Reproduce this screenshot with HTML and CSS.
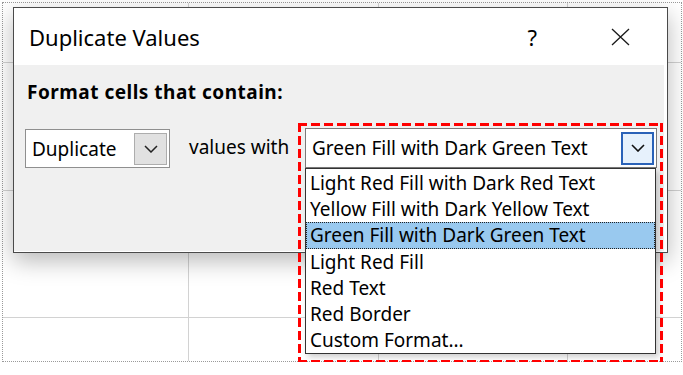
FILE: index.html
```html
<!DOCTYPE html>
<html lang="en">

<head>
    <meta charset="UTF-8">
    <meta name="viewport" content="width=device-width, initial-scale=1.0">
    <title>Duplicate Values</title>
    <link rel="stylesheet" href="styles.css">
</head>

<body>
    <div class="sheet">
        <div class="dialog">
            <div class="title-bar">
                <span class="title">Duplicate Values</span>
                <span class="help">?</span>
                <span class="close">
                    <svg width="19" height="18" viewBox="0 0 19 18">
                        <path d="M1 1 L18 17 M18 1 L1 17" stroke="#1a1a1a" stroke-width="1.3" fill="none" />
                    </svg>
                </span>
            </div>
            <div class="dialog-body">
                <div class="label">Format cells that contain:</div>
                <div class="rule-row">
                    <div class="select select-small">
                        <span class="select-text">Duplicate</span>
                        <span class="select-btn">
                            <svg width="14" height="8" viewBox="0 0 14 8">
                                <path d="M1 1 L7 7 L13 1" stroke="#222" stroke-width="1.5" fill="none" />
                            </svg>
                        </span>
                    </div>
                    <span class="values-with">values with</span>
                    <div class="combo-wrap">
                        <div class="select select-wide">
                            <span class="select-text">Green Fill with Dark Green Text</span>
                            <span class="select-btn focused">
                                <svg width="14" height="8" viewBox="0 0 14 8">
                                    <path d="M1 1 L7 7 L13 1" stroke="#111" stroke-width="1.6" fill="none" />
                                </svg>
                            </span>
                        </div>
                        <ul class="format-list">
                            <li>Light Red Fill with Dark Red Text</li>
                            <li>Yellow Fill with Dark Yellow Text</li>
                            <li class="selected">Green Fill with Dark Green Text</li>
                            <li>Light Red Fill</li>
                            <li>Red Text</li>
                            <li>Red Border</li>
                            <li>Custom Format...</li>
                        </ul>
                        <div class="callout"></div>
                    </div>
                </div>
            </div>
        </div>
    </div>
</body>

</html>
```

FILE: styles.css
```css
/* Page */
body {
    margin: 0;
    background: #fff;
    font-family: "Noto Sans", "Liberation Sans", sans-serif;
    color: #000;
}

/* Spreadsheet behind the dialog, grid lines drawn as background */
.sheet {
    margin: 2px 0 0 2px;
    width: 680px;
    height: 360px;
    box-sizing: border-box;
    border: 1px dotted #9a9a9a;
    padding: 4px 0 0 10px;
    background:
        linear-gradient(#d2d2d2, #d2d2d2) 185px 0 / 1px 100% no-repeat,
        linear-gradient(#d2d2d2, #d2d2d2) 375px 0 / 1px 100% no-repeat,
        linear-gradient(#d2d2d2, #d2d2d2) 564px 0 / 1px 100% no-repeat,
        linear-gradient(#d2d2d2, #d2d2d2) 0 59px / 100% 1px no-repeat,
        linear-gradient(#d2d2d2, #d2d2d2) 0 187px / 100% 1px no-repeat,
        linear-gradient(#d2d2d2, #d2d2d2) 0 314px / 100% 1px no-repeat;
}

/* Dialog window */
.dialog {
    width: 655px;
    height: 246px;
    box-sizing: border-box;
    border: 1px solid #4a4a4a;
    background: #fff;
    box-shadow: 0 8px 22px rgba(0, 0, 0, 0.28);
}

.title-bar {
    height: 57px;
    display: flex;
    align-items: center;
    padding: 0 37px 0 15px;
}

.title {
    font-size: 22px;
    flex: 1;
}

.help {
    font-size: 22px;
    margin-right: 74px;
}

.close {
    display: flex;
}

.dialog-body {
    background: #f0f0f0;
    height: 186px;
    margin-right: 3px;
    box-sizing: border-box;
    padding: 15px 7px 0 11px;
}

.label {
    font-weight: bold;
    font-size: 19px;
    letter-spacing: 0.5px;
    line-height: 24px;
    padding-left: 2px;
}

.rule-row {
    display: flex;
    align-items: flex-start;
    margin-top: 24px;
}

/* Dropdown boxes */
.select {
    display: flex;
    align-items: center;
    justify-content: space-between;
    box-sizing: border-box;
    background: #fff;
    border: 1px solid #8f8f8f;
    font-size: 19px;
}

.select-text {
    padding-left: 6px;
    white-space: nowrap;
}

.select-small {
    width: 145px;
    height: 39px;
    margin-top: 1px;
}

.select-wide {
    width: 352px;
    height: 40px;
    border-color: #7a7a7a;
}

.select-btn {
    width: 33px;
    height: 32px;
    margin-right: 2px;
    box-sizing: border-box;
    border: 1px solid #adadad;
    background: #e1e1e1;
    display: flex;
    align-items: center;
    justify-content: center;
}

.select-btn.focused {
    height: 33px;
    border: 2px solid #2a62b8;
    background: #e6f1fc;
}

.values-with {
    font-size: 19px;
    line-height: 39px;
    margin-left: 19px;
}

.combo-wrap {
    position: relative;
    margin-left: auto;
    width: 352px;
}

/* Open dropdown list */
.format-list {
    position: absolute;
    top: 40px;
    left: 0;
    width: 351px;
    margin: 0;
    padding: 1px 0 0;
    list-style: none;
    box-sizing: border-box;
    border: 1px solid #333;
    background: #fff;
    box-shadow: 3px 3px 6px rgba(0, 0, 0, 0.2);
    font-size: 19px;
    z-index: 2;
}

.format-list li {
    line-height: 26.2px;
    padding: 0 4px;
    white-space: nowrap;
}

.format-list li.selected {
    background: #99c9ef;
    outline: 1px dotted #222;
    outline-offset: -1px;
}

/* Red dashed annotation around the combo (short dashes, small gaps) */
.callout {
    position: absolute;
    left: -7px;
    top: -5px;
    width: 365px;
    height: 240px;
    background:
        repeating-linear-gradient(90deg, #f00 0 9px, transparent 9px 13px) left top / 100% 3px no-repeat,
        repeating-linear-gradient(90deg, #f00 0 9px, transparent 9px 13px) left bottom / 100% 3px no-repeat,
        repeating-linear-gradient(180deg, #f00 0 9px, transparent 9px 13px) left top / 3px 100% no-repeat,
        repeating-linear-gradient(180deg, #f00 0 9px, transparent 9px 13px) right top / 3px 100% no-repeat;
    z-index: 3;
    pointer-events: none;
}
```
